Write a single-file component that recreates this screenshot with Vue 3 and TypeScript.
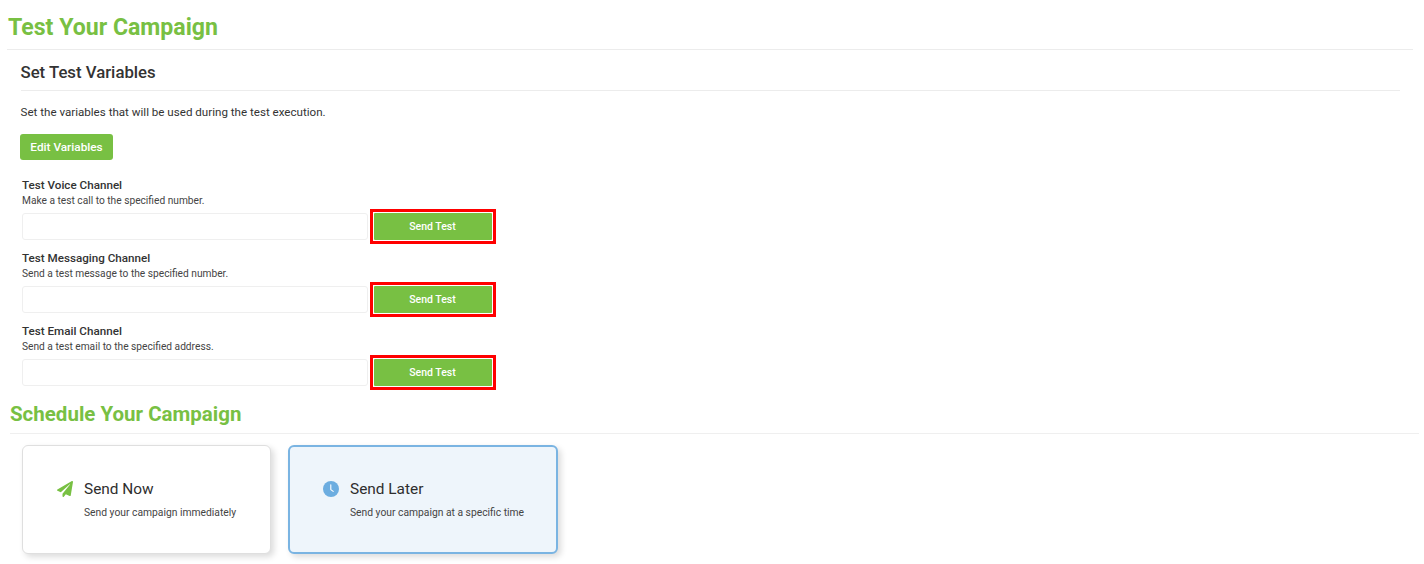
<script setup lang="ts">
const channels = [
  { title: 'Test Voice Channel', help: 'Make a test call to the specified number.' },
  { title: 'Test Messaging Channel', help: 'Send a test message to the specified number.' },
  { title: 'Test Email Channel', help: 'Send a test email to the specified address.' },
]
</script>

<template>
  <div class="page">
    <section class="test">
      <h1 class="page-title">Test Your Campaign</h1>
      <div class="vars">
        <h2 class="sub-title">Set Test Variables</h2>
        <p class="intro">Set the variables that will be used during the test execution.</p>
        <button class="edit-btn" type="button">Edit Variables</button>
        <div class="channels">
          <div v-for="c in channels" :key="c.title" class="channel">
            <div class="channel-title">{{ c.title }}</div>
            <div class="channel-help">{{ c.help }}</div>
            <div class="channel-row">
              <input class="channel-input" type="text" />
              <div class="mark">
                <button class="send-btn" type="button">Send Test</button>
              </div>
            </div>
          </div>
        </div>
      </div>
    </section>

    <section class="schedule">
      <h1 class="schedule-title">Schedule Your Campaign</h1>
      <div class="cards">
        <div class="card card--now">
          <div class="card-head">
            <svg class="card-icon" viewBox="0 0 512 512" aria-hidden="true">
              <path fill="#78c043" d="M476 3.2 12.5 270.6c-18.100 10.400-15.800 35.600 2.200 43.200L121 358.400l287.300-253.200c5.500-4.900 13.300 2.600 8.600 8.300L176 407v80.500c0 23.600 28.500 32.900 42.500 15.800L282 426l124.600 52.200c14.200 6 30.400-2.900 33-18.200l72-432C515 7.800 493.300-6.800 476 3.200z" />
            </svg>
            <span class="card-title">Send Now</span>
          </div>
          <p class="card-text">Send your campaign immediately</p>
        </div>
        <div class="card card--later">
          <div class="card-head">
            <svg class="card-icon" viewBox="0 0 16 16" aria-hidden="true">
              <circle cx="8" cy="8" r="8" fill="#6cade0" />
              <path d="M7.800 3.800V8.600L10.200 10.400" fill="none" stroke="#fff" stroke-width="1.100" stroke-linecap="round" stroke-linejoin="round" />
            </svg>
            <span class="card-title">Send Later</span>
          </div>
          <p class="card-text">Send your campaign at a specific time</p>
        </div>
      </div>
    </section>
  </div>
</template>

<style scoped>
.page {
  width: 1424px;
  height: 564px;
  overflow: hidden;
  font-family: Roboto, 'Liberation Sans', sans-serif;
  color: #333;
  background: #fff;
}

.test {
  padding: 0 11px 0 7px;
}

.page-title {
  margin: 0;
  height: 50px;
  padding: 13px 0 0 1px;
  box-sizing: border-box;
  font-size: 23.1px;
  line-height: 29px;
  font-weight: 700;
  color: #78c043;
  border-bottom: 1px solid #ececec;
}

.vars {
  padding: 0 13px 0 13.5px;
}

.sub-title {
  margin: 0;
  height: 41px;
  padding-top: 12px;
  box-sizing: border-box;
  font-size: 16.75px;
  line-height: 20px;
  font-weight: 500;
  color: #333;
  border-bottom: 1px solid #ececec;
}

.intro {
  margin: 14px 0 0;
  font-size: 11.6px;
  line-height: 15px;
  color: #333;
}

.edit-btn {
  display: block;
  margin-top: 14px;
  margin-left: -0.5px;
  width: 93px;
  height: 26px;
  padding: 0;
  border: 0;
  border-radius: 3px;
  background: #78c043;
  color: #fff;
  font-family: inherit;
  font-size: 11.8px;
  font-weight: 500;
}

.channels {
  margin-top: 16px;
  padding-left: 1.5px;
}

.channel {
  height: 72.75px;
}

.channel-title {
  font-size: 11.65px;
  line-height: 18px;
  font-weight: 500;
  color: #333;
}

.channel-help {
  font-size: 10.2px;
  line-height: 13px;
  color: #444;
}

.channel-row {
  display: flex;
  align-items: center;
  gap: 2px;
  margin-top: 2px;
}

.channel-input {
  width: 346px;
  height: 27px;
  padding: 0;
  box-sizing: border-box;
  border: 1px solid #efefef;
  border-radius: 3px;
  background: #fff;
}

.mark {
  display: flex;
  padding: 1px;
  border: 3px solid #f00;
  background: #fff;
}

.send-btn {
  width: 118px;
  height: 27px;
  padding: 0 1px 0 0;
  border: 0;
  border-radius: 1px;
  background: #78c043;
  color: #fff;
  font-family: inherit;
  font-size: 10.5px;
  font-weight: 500;
}

.schedule {
  margin-top: 3.75px;
  padding: 0 5px 0 10px;
}

.schedule-title {
  margin: 0;
  height: 36px;
  padding-top: 4px;
  box-sizing: border-box;
  font-size: 20.5px;
  line-height: 25px;
  font-weight: 700;
  color: #78c043;
  border-bottom: 1px solid #efefef;
}

.cards {
  display: flex;
  gap: 17px;
  margin-top: 11px;
  padding-left: 12px;
}

.card {
  display: flex;
  flex-direction: column;
  justify-content: center;
  height: 109px;
  padding-bottom: 1px;
  box-sizing: border-box;
  border-radius: 6px;
  box-shadow: 3px 3px 6px rgba(0, 0, 0, 0.14);
}

.card--now {
  width: 249px;
  padding-left: 34px;
  border: 1px solid #dfdfdf;
  background: #fff;
}

.card--later {
  width: 270px;
  padding-left: 33px;
  border: 2px solid #7ab4e2;
  background: #eef5fb;
}

.card-head {
  display: flex;
  align-items: center;
  gap: 11px;
}

.card-icon {
  width: 16px;
  height: 16px;
  flex-shrink: 0;
}

.card-title {
  font-size: 15.4px;
  line-height: 20px;
  color: #2e2e2e;
}

.card-text {
  margin: 6px 0 0 27px;
  font-size: 10.3px;
  line-height: 15px;
  color: #444;
}
</style>
